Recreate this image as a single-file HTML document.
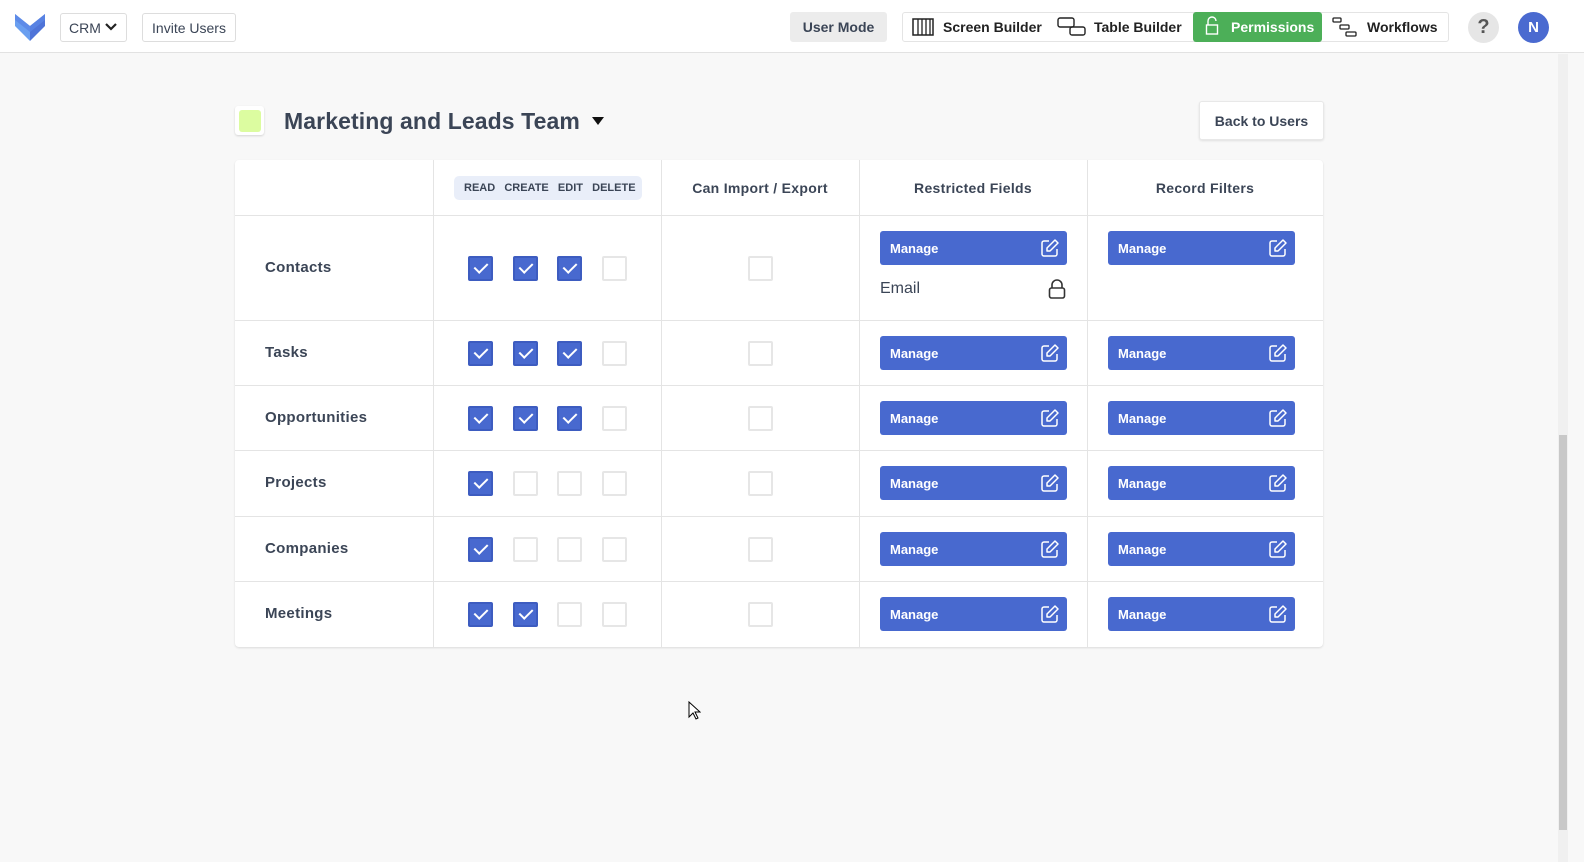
<!DOCTYPE html>
<html><head><style>
*{box-sizing:border-box;margin:0;padding:0}
html{width:1584px;height:862px;overflow:hidden}
body{width:1584px;height:862px;background:#f8f8f8;font-family:"Liberation Sans",sans-serif;color:#3b4556;position:relative;overflow:hidden}
.top{position:absolute;left:0;top:0;width:1584px;height:53px;background:#fff;border-bottom:1px solid #e2e2e2}
.btn{position:absolute;background:#fff;border:1px solid #ddd;border-radius:3px;font-size:14px;display:flex;align-items:center;justify-content:center;white-space:nowrap}
.abs{position:absolute;white-space:nowrap}
.card{position:absolute;left:235px;top:160px;width:1088px;height:487px;background:#fff;border-radius:4px;box-shadow:0 1px 2px rgba(0,0,0,.12)}
.vl{position:absolute;top:0;width:1px;height:487px;background:#e4e4e4}
.hl{position:absolute;left:0;width:1088px;height:1px;background:#e4e4e4}
.cb{position:absolute;width:25px;height:25px;border-radius:2px;border:2px solid #e6e6e6;background:#fff}
.cb.on{background:#4869cf;border-color:#3d5cc0}
.cb.on:after{content:"";position:absolute;left:7px;top:2px;width:6px;height:11px;border:solid #fff;border-width:0 2px 2px 0;transform:rotate(45deg)}
.mg{position:absolute;width:187px;height:34px;background:#4869cf;border-radius:3px;color:#fff;font-weight:bold;font-size:13px;padding:10px 0 0 10px}
.mg svg{position:absolute;right:7px;top:7px}
.lbl{position:absolute;left:30px;font-weight:bold;font-size:15px;letter-spacing:.3px}
.hd{position:absolute;top:20px;font-weight:bold;font-size:14px;letter-spacing:.3px;text-align:center}
</style></head><body>
<div class="top">
<svg class="abs" style="left:14px;top:12px" width="32" height="30" viewBox="0 0 32 30"><path d="M1 2 L16 14 L16 29 L1 14Z" fill="#6a9ff0"/><path d="M16 14 L31 2 L31 14 L16 29Z" fill="#4f74d8"/><path d="M1 2 L16 14 L31 2 L31 8 L16 20 L1 8Z" fill="#5a86e6" opacity=".8"/></svg>
<div class="btn" style="left:60px;top:13px;width:67px;height:29px;justify-content:flex-start;padding-left:8px">CRM<svg class="abs" style="right:9px;top:9px" width="12" height="8" viewBox="0 0 12 8"><path d="M1 1l5 5 5-5" stroke="#222" stroke-width="2.2" fill="none"/></svg></div>
<div class="btn" style="left:142px;top:13px;width:94px;height:29px">Invite Users</div>
<div class="btn" style="left:790px;top:12px;width:97px;height:30px;background:#ececec;border-color:#ececec;font-weight:bold;font-size:14px">User Mode</div>
<div class="btn" style="left:902px;top:12px;width:547px;height:30px;border-color:#e4e4e4"></div>
<svg class="abs" style="left:912px;top:18px" width="22" height="18"><rect x="1" y="1" width="20" height="16" fill="none" stroke="#222" stroke-width="1.5"/><path d="M6 1v16M10 1v16M14 1v16M18 1v16" stroke="#222" stroke-width="1.3"/></svg>
<div class="abs" style="left:943px;top:19px;font-size:14px;font-weight:bold;color:#222">Screen Builder</div>
<svg class="abs" style="left:1057px;top:17px" width="30" height="20"><rect x="1" y="1" width="16" height="9" rx="2" fill="none" stroke="#222" stroke-width="1.4"/><rect x="13" y="10" width="15" height="8" rx="2" fill="none" stroke="#222" stroke-width="1.4"/></svg>
<div class="abs" style="left:1094px;top:19px;font-size:14px;font-weight:bold;color:#222">Table Builder</div>
<div class="abs" style="left:1193px;top:12px;width:129px;height:30px;background:#4caf58;border-radius:3px"></div>
<svg class="abs" style="left:1205px;top:16px" width="14" height="20"><path d="M3 9V5a4 4 0 0 1 8 0" fill="none" stroke="#fff" stroke-width="1.4"/><rect x="1.5" y="9" width="11" height="9" fill="none" stroke="#fff" stroke-width="1.4"/></svg>
<div class="abs" style="left:1231px;top:19px;font-size:14px;font-weight:bold;color:#fff">Permissions</div>
<svg class="abs" style="left:1332px;top:17px" width="26" height="20"><rect x="1" y="1" width="8" height="4" rx="1" fill="none" stroke="#222" stroke-width="1.3"/><rect x="8" y="8" width="9" height="4" rx="1" fill="none" stroke="#222" stroke-width="1.3"/><rect x="14" y="15" width="10" height="4" rx="1" fill="none" stroke="#222" stroke-width="1.3"/></svg>
<div class="abs" style="left:1367px;top:19px;font-size:14px;font-weight:bold;color:#222">Workflows</div>
<div class="abs" style="left:1468px;top:12px;width:31px;height:31px;border-radius:50%;background:#e6e6e6;font-size:20px;font-weight:bold;color:#555;text-align:center;line-height:31px">?</div>
<div class="abs" style="left:1518px;top:12px;width:31px;height:31px;border-radius:50%;background:#4a6ad0;font-size:15px;font-weight:bold;color:#fff;text-align:center;line-height:31px">N</div>
</div>
<div class="abs" style="left:1558px;top:54px;width:10px;height:808px;background:#f0f0f0"></div>
<div class="abs" style="left:1559px;top:435px;width:8px;height:395px;background:#c8c8c8"></div>
<div class="abs" style="left:235px;top:106px;width:29px;height:29px;background:#fff;border-radius:3px;box-shadow:0 1px 2px rgba(0,0,0,.15)"></div>
<div class="abs" style="left:239px;top:110px;width:22px;height:22px;background:#dcfca0;border-radius:3px"></div>
<div class="abs" style="left:284px;top:108px;font-size:23px;font-weight:bold;letter-spacing:.1px">Marketing and Leads Team</div>
<svg class="abs" style="left:592px;top:117px" width="12" height="9"><path d="M0 0h12L6 8z" fill="#111"/></svg>
<div class="btn" style="left:1199px;top:101px;width:125px;height:39px;border-color:#e8e8e8;font-weight:bold;box-shadow:0 1px 2px rgba(0,0,0,.1)">Back to Users</div>
<div class="card">
<div class="vl" style="left:198px"></div><div class="vl" style="left:426px"></div><div class="vl" style="left:624px"></div><div class="vl" style="left:852px"></div>
<div class="hl" style="top:55px"></div><div class="hl" style="top:160px"></div><div class="hl" style="top:225px"></div><div class="hl" style="top:290px"></div><div class="hl" style="top:356px"></div><div class="hl" style="top:421px"></div>
<div class="abs" style="left:219px;top:16px;width:188px;height:24px;background:#e9eef9;border-radius:5px;font-size:11px;font-weight:bold;padding:6px 0 0 10px;white-space:nowrap">READ&nbsp;&nbsp; CREATE&nbsp;&nbsp; EDIT&nbsp;&nbsp; DELETE</div>
<div class="hd" style="left:426px;width:198px">Can Import / Export</div>
<div class="hd" style="left:624px;width:228px">Restricted Fields</div>
<div class="hd" style="left:852px;width:236px">Record Filters</div>
<div class="abs" style="left:645px;top:120px;font-size:16px">Email</div>
<svg class="abs" style="left:813px;top:119px" width="18" height="21"><path d="M4 9V6a5 5 0 0 1 10 0v3" fill="none" stroke="#333" stroke-width="1.6"/><rect x="1.5" y="9" width="15" height="10" rx="2" fill="none" stroke="#333" stroke-width="1.6"/></svg>
<div id="rows"></div>
</div>
<script>
var rows=[["Contacts",108,1,1,1,0,88],["Tasks",193,1,1,1,0,193],["Opportunities",258,1,1,1,0,258],["Projects",323,1,0,0,0,323],["Companies",389,1,0,0,0,389],["Meetings",454,1,1,0,0,454]];
var h="",xs=[233,278,322,367];
var ic='<svg width="20" height="20" viewBox="0 0 20 20"><path d="M9 3H4a2 2 0 0 0-2 2v11a2 2 0 0 0 2 2h11a2 2 0 0 0 2-2v-5" fill="none" stroke="#fff" stroke-width="1.5"/><path d="M15 2l3 3-8 8H7v-3z" fill="none" stroke="#fff" stroke-width="1.5" stroke-linejoin="round"/></svg>';
rows.forEach(function(r){var c=r[1];
h+='<div class="lbl" style="top:'+(c-9)+'px">'+r[0]+'</div>';
for(var i=0;i<4;i++)h+='<div class="cb'+(r[2+i]?' on':'')+'" style="left:'+xs[i]+'px;top:'+(c-12)+'px"></div>';
h+='<div class="cb" style="left:513px;top:'+(c-12)+'px"></div>';
var m=r[6];h+='<div class="mg" style="left:645px;top:'+(m-17)+'px">Manage'+ic+'</div><div class="mg" style="left:873px;top:'+(m-17)+'px">Manage'+ic+'</div>';});
document.getElementById("rows").innerHTML=h;
</script>
<svg class="abs" style="left:688px;top:701px" width="13" height="20"><path d="M1 1v15l4-4 3 6 2-1-3-6h5z" fill="#fff" stroke="#000" stroke-width="1"/></svg>
</body></html>
